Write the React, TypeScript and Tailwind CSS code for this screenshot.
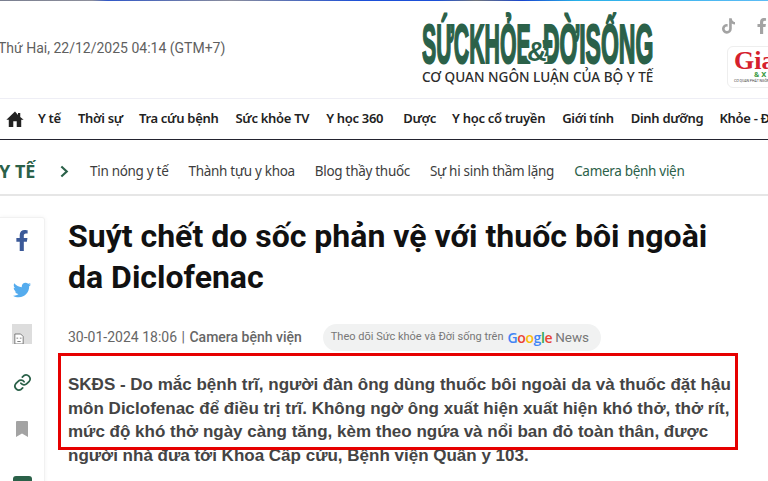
import { FaTiktok, FaFacebookF, FaTwitter } from "react-icons/fa";

const nav = [
  ["Y tế", 17],
  ["Thời sự", 16],
  ["Tra cứu bệnh", 17],
  ["Sức khỏe TV", 17],
  ["Y học 360", 20],
  ["Dược", 16],
  ["Y học cổ truyền", 17],
  ["Giới tính", 17],
  ["Dinh dưỡng", 16],
  ["Khỏe - Đẹp", 0],
] as const;
const sub = ["Tin nóng y tế", "Thành tựu y khoa", "Blog thầy thuốc", "Sự hi sinh thầm lặng"];

export default function App() {
  return (
    <div className="relative w-[768px] h-[481px] overflow-hidden bg-white font-['Roboto',sans-serif]">
      <div className="h-px bg-[linear-gradient(90deg,#7a7f90_0%,#8d8f9c_12%,#3158c8_14%,#8b8d9c_30%,#1b4fd8_47%,#1b4fd8_57%,#70747c_62%,#1746d0_68%,#27b0e8_75%,#5dbcf5_100%)]" />
      <header className="h-[97px] flex items-start">
        <div className="w-[422px] shrink-0 pt-[39px] -ml-[2px] text-[14px] leading-[16px] text-[#5f5f5f] whitespace-nowrap">
          Thứ Hai, 22/12/2025 04:14 (GTM+7)
        </div>
        <div className="w-[240px] shrink-0 ml-[2px] pt-[13px] flex flex-col">
          <div className="relative h-[54px]">
            <span className="absolute left-0 top-[2px] origin-top-left scale-x-[0.56] scale-y-[1.47] whitespace-nowrap font-['Liberation_Sans',sans-serif] font-bold text-[38px] leading-[38px] text-[#2b6149] [-webkit-text-stroke:1.5px_#2b6149]">
              SỨCKHỎE
            </span>
            <span className="absolute left-[121px] top-[2px] origin-top-left scale-x-[0.605] scale-y-[1.47] whitespace-nowrap font-['Liberation_Sans',sans-serif] font-bold text-[38px] leading-[38px] text-[#2b6149] [-webkit-text-stroke:1.5px_#2b6149]">
              ĐỜISỐNG
            </span>
            <span className="absolute left-[105px] top-[24px] font-['Liberation_Sans',sans-serif] font-bold text-[27px] leading-[28px] text-[#2b6149] [-webkit-text-stroke:3px_white] [paint-order:stroke_fill]">
              &amp;
            </span>
          </div>
          <div className="mt-[1px] whitespace-nowrap font-['Noto_Sans',sans-serif] font-medium text-[13.55px] leading-[16px] text-[#2c2c2c]">
            CƠ QUAN NGÔN LUẬN CỦA BỘ Y TẾ
          </div>
        </div>
        <div className="flex-1 min-w-0 pl-[60px] pt-[17px] flex flex-col">
          <div className="flex items-center gap-[21px] text-[#a3a3a3]">
            <FaTiktok className="w-[14px] h-[16px]" />
            <FaFacebookF className="w-[12px] h-[16px]" />
          </div>
          <div className="mt-[12px] ml-[5px] w-[60px] h-[42px] rounded-[6px] border border-[#eeeeee] pl-[6px] pt-[4px] overflow-hidden whitespace-nowrap">
            <div className="font-['Liberation_Serif',serif] font-bold text-[26px] leading-[20px] text-[#d5202c]">Giao</div>
            <div className="pl-[20px] text-[8px] leading-[8px] font-bold text-[#3a9a3f]">&amp; X</div>
            <div className="text-[3.5px] leading-[5px] text-[#444444]">CƠ QUAN PHÁT NGÔN CỦA</div>
          </div>
        </div>
      </header>
      <nav className="h-[42px] border-y border-t-[#eeeef5] border-b-[#23232f] flex items-center pb-[1px] pl-[6px] whitespace-nowrap font-['Noto_Sans',sans-serif] font-semibold text-[13px] text-[#222222]">
        <svg viewBox="0 0 24 24" className="w-[18px] h-[18px] mr-[14px] shrink-0 fill-[#222222]">
          <path d="M12 2 0.5 13h3.2v9.5h6V15h4.600v7.500h6V13h3.200L19 9.400V4h-3v2.500z" />
        </svg>
        {nav.map(([t, gap]) => (
          <span key={t} className="tracking-[-0.3px] shrink-0" style={{ marginRight: gap }}>{t}</span>
        ))}
      </nav>
      <div className="h-[56px] border-b-2 border-[#e6e6e6] pt-[9px] flex items-center whitespace-nowrap font-['Noto_Sans',sans-serif] text-[13.5px] text-[#3d3d3d]">
        <span className="-ml-[1px] w-[61px] font-bold text-[18px] text-[#2b6149]">Y TẾ</span>
        <svg viewBox="0 0 10 14" className="w-[9px] h-[13px] mr-[21px] shrink-0 fill-none stroke-[#2b6149] stroke-[2.4]">
          <path d="M1.500 1.500 7.500 7l-6 5.500" />
        </svg>
        {sub.map((s) => (
          <span key={s} className="mr-[20px] tracking-[-0.3px]">{s}</span>
        ))}
        <span className="tracking-[-0.3px] text-[#2b6149]">Camera bệnh viện</span>
      </div>
      <main className="flex pt-[20px]">
        <aside className="w-[45px] h-[300px] shrink-0 mt-[1px] rounded-tr-[3px] border border-l-0 border-[#f1f1f1] shadow-[0_0_4px_rgba(0,0,0,0.05)] flex flex-col items-center pt-[12px]">
          <FaFacebookF className="w-[14px] h-[21px] text-[#3b5998] shrink-0" />
          <FaTwitter className="mt-[30px] w-[20px] h-[18px] text-[#55acee] shrink-0" />
          <div className="mt-[25px] w-[20px] h-[20px] bg-[#dddddd] pl-[2px] pt-[9px] overflow-hidden shrink-0">
            <svg viewBox="0 0 12 14" className="w-[10px] h-[12px] fill-white stroke-[#666666]">
              <path d="M1 1h7l3 3v9H1z" />
              <path d="M3 6h2M7 6h2M4 10h4" />
            </svg>
          </div>
          <svg viewBox="0 0 24 24" className="mt-[29px] w-[19px] h-[19px] shrink-0 fill-none stroke-[#2b6149] stroke-[2.2]" strokeLinecap="round" strokeLinejoin="round">
            <path d="M10 13a5 5 0 0 0 7.500.5l3-3a5 5 0 0 0-7-7l-1.700 1.700" />
            <path d="M14 11a5 5 0 0 0-7.500-.5l-3 3a5 5 0 0 0 7 7l1.700-1.700" />
          </svg>
          <svg viewBox="0 0 12 16" className="mt-[29px] w-[12px] h-[16px] shrink-0 fill-[#a3a3a3]">
            <path d="M1 0h10a1 1 0 0 1 1 1v15l-6-3.500L0 16V1a1 1 0 0 1 1-1z" />
          </svg>
          <div className="mt-[39px] w-[19px] h-[12px] rounded-t-[3px] bg-[#2b6149] shrink-0" />
        </aside>
        <article className="ml-[23px] w-[668px] shrink-0">
          <h1 className="text-[32px] leading-[41px] font-bold text-[#111111] w-[660px]">
            Suýt chết do sốc phản vệ với thuốc bôi ngoài da Diclofenac
          </h1>
          <div className="mt-[25px] h-[28px] flex items-center whitespace-nowrap">
            <span className="text-[14px] text-[#666666]">30-01-2024 18:06</span>
            <span className="mx-[4.5px] text-[14px] text-[#666666]">|</span>
            <span className="text-[14px] font-medium text-[#666666]">Camera bệnh viện</span>
            <div className="ml-[21px] h-[27px] w-[278px] rounded-full bg-[#f1f2f2] flex items-center pl-[8px]">
              <span className="text-[11px] text-[#777777]">Theo dõi Sức khỏe và Đời sống trên</span>
              <span className="ml-[4px] font-['Open_Sans',sans-serif] font-semibold text-[14px] tracking-[-0.4px]">
                <span className="text-[#4285f4]">G</span>
                <span className="text-[#ea4335]">o</span>
                <span className="text-[#fbbc05]">o</span>
                <span className="text-[#4285f4]">g</span>
                <span className="text-[#34a853]">l</span>
                <span className="text-[#ea4335]">e</span>
              </span>
              <span className="ml-[3px] text-[13.500px] text-[#777777]">News</span>
            </div>
          </div>
          <p className="mt-[22px] w-[668px] font-['Liberation_Sans',sans-serif] font-bold text-[17px] leading-[23.7px] text-[#444444]">
            SKĐS - Do mắc bệnh trĩ, người đàn ông dùng thuốc bôi ngoài da và thuốc đặt hậu môn Diclofenac để điều trị trĩ. Không ngờ ông xuất hiện xuất hiện khó thở, thở rít, mức độ khó thở ngày càng tăng, kèm theo ngứa và nổi ban đỏ toàn thân, được người nhà đưa tới Khoa Cấp cứu, Bệnh viện Quân y 103.
          </p>
        </article>
      </main>
      <div className="absolute left-[58px] top-[353px] w-[680px] h-[97px] border-[3px] border-[#e60000] pointer-events-none" />
    </div>
  );
}
